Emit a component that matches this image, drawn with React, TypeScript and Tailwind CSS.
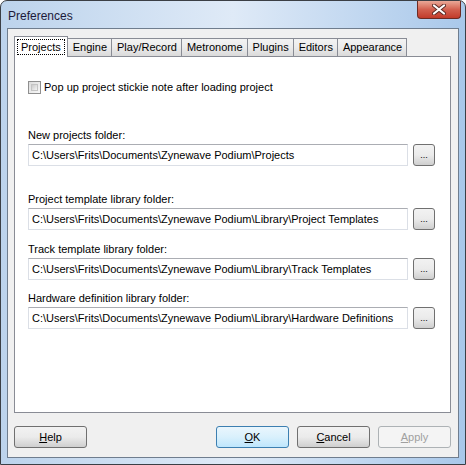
import * as React from 'react';

const tabs = ['Projects', 'Engine', 'Play/Record', 'Metronome', 'Plugins', 'Editors', 'Appearance'];

const folders = [
  { label: 'New projects folder:', value: 'C:\\Users\\Frits\\Documents\\Zynewave Podium\\Projects', gap: 'mt-[34px]' },
  { label: 'Project template library folder:', value: 'C:\\Users\\Frits\\Documents\\Zynewave Podium\\Library\\Project Templates', gap: 'mt-[26px]' },
  { label: 'Track template library folder:', value: 'C:\\Users\\Frits\\Documents\\Zynewave Podium\\Library\\Track Templates', gap: 'mt-[12px]' },
  { label: 'Hardware definition library folder:', value: 'C:\\Users\\Frits\\Documents\\Zynewave Podium\\Library\\Hardware Definitions', gap: 'mt-[11px]' },
];

function CloseButton() {
  return (
    <div className="mr-[4px] flex h-[18px] w-[44px] items-center justify-center self-start rounded-b-[4px] border border-t-0 border-[#6d2b24] bg-gradient-to-b from-[#e9a897] via-[#d2604f] to-[#c23a2a]">
      <svg width="14" height="11" viewBox="0 0 14 11">
        <path d="M2 1.5 L12 9.5 M12 1.5 L2 9.5" stroke="#5a2a24" strokeWidth="4" strokeLinecap="round" />
        <path d="M2 1.5 L12 9.5 M12 1.5 L2 9.5" stroke="#ffffff" strokeWidth="2.2" strokeLinecap="round" />
      </svg>
    </div>
  );
}

function Tab({ name, active }: { name: string; active: boolean }) {
  if (active) {
    return (
      <div className="relative z-10 -mb-px flex h-[21px] items-start border border-b-0 border-[#898c95] bg-white px-[2px] pt-[2px]">
        <span className="border border-dotted border-black px-[3px] leading-[14px]">{name}</span>
      </div>
    );
  }
  return (
    <div className="-ml-px flex h-[18px] items-center border border-b-0 border-[#898c95] bg-gradient-to-b from-[#f3f3f3] via-[#ebebeb] to-[#dadada] pl-[5px] pr-[4px]">
      {name}
    </div>
  );
}

function WinButton({
  children,
  variant = 'normal',
  className = '',
}: {
  children: React.ReactNode;
  variant?: 'normal' | 'default' | 'disabled';
  className?: string;
}) {
  const style =
    variant === 'default'
      ? 'border-[#3c7fb1] bg-gradient-to-b from-[#eaf6fd] via-[#d9f0fc] to-[#bee6fd] text-black'
      : variant === 'disabled'
        ? 'border-[#adb2b5] bg-[#f4f4f4] text-[#a0a0a0]'
        : 'border-[#707070] bg-gradient-to-b from-[#f2f2f2] via-[#ebebeb] to-[#cfcfcf] text-black';
  return (
    <div className={`flex h-[22px] w-[73px] items-center justify-center rounded-[3px] border ${style} ${className}`}>
      {children}
    </div>
  );
}

function FolderField({ label, value, gap }: { label: string; value: string; gap: string }) {
  return (
    <div className={`flex flex-col ${gap}`}>
      <span className="leading-[14px]">{label}</span>
      <div className="mt-[2px] flex items-center gap-[5px]">
        <div className="flex h-[22px] w-[380px] items-center border border-[#dbdfe6] border-t-[#abadb3] bg-white px-[3px]">
          {value}
        </div>
        <div className="flex h-[22px] w-[22px] items-end justify-center rounded-[3px] border border-[#707070] bg-gradient-to-b from-[#f2f2f2] via-[#ebebeb] to-[#cfcfcf] pb-[5px] text-[9px] leading-none">
          ...
        </div>
      </div>
    </div>
  );
}

export default function App() {
  return (
    <div
      className="h-[465px] w-[466px] bg-white text-[11px] text-black"
      style={{ fontFamily: '"Liberation Sans", Arial, sans-serif' }}
    >
      <div className="flex h-full flex-col rounded-t-[7px] border border-[#3b3f45] bg-gradient-to-r from-[#bcd3ec] via-[#dfeaf7] to-[#a9c8ea]">
        <div className="flex h-[27px] items-start justify-between">
          <span className="pl-[7px] pt-[6px] text-[12px] text-[#1c1a3a]">Preferences</span>
          <CloseButton />
        </div>
        <div className="mx-[6px] mb-[6px] flex flex-1 flex-col border border-[#6f7d8e] bg-[#f0f0f0] pl-[6px] pr-[7px]">
          <div className="mt-[7px] flex items-end">
            {tabs.map((t, i) => (
              <Tab key={t} name={t} active={i === 0} />
            ))}
          </div>
          <div className="flex h-[357px] flex-col border border-[#898c95] bg-white px-[13px] pt-[23px]">
            <div className="flex items-center gap-[3px]">
              <div className="h-[13px] w-[13px] border border-[#8f8f8f] bg-gradient-to-br from-[#dcdcdc] to-[#f8f8f8] p-[2px]">
                <div className="h-full w-full border border-[#c4c4c4] bg-gradient-to-br from-[#cbcbcb] to-[#f4f4f4]" />
              </div>
              <span className="leading-[14px]">Pop up project stickie note after loading project</span>
            </div>
            {folders.map((f) => (
              <FolderField key={f.label} {...f} />
            ))}
          </div>
          <div className="mt-[13px] flex items-center">
            <WinButton>
              <span><u>H</u>elp</span>
            </WinButton>
            <div className="flex-1" />
            <WinButton variant="default">
              <span><u>O</u>K</span>
            </WinButton>
            <WinButton className="ml-[8px]">
              <span><u>C</u>ancel</span>
            </WinButton>
            <WinButton variant="disabled" className="ml-[8px]">
              <span><u>A</u>pply</span>
            </WinButton>
          </div>
        </div>
      </div>
    </div>
  );
}
